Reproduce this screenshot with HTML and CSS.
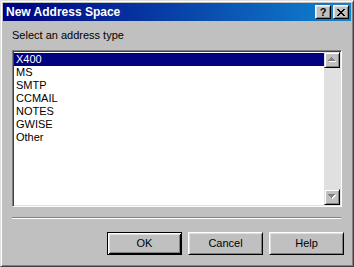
FILE: index.html
```html
<!DOCTYPE html>
<html>
<head>
<meta charset="utf-8">
<link rel="stylesheet" href="styles.css">
</head>
<body>
<div class="window">
  <div class="titlebar">
    <span class="title">New Address Space</span>
    <div class="caption-buttons">
      <div class="cap-btn help-btn">?</div>
      <div class="cap-btn close-btn">
        <svg width="8" height="7" viewBox="0 0 8 7" shape-rendering="crispEdges">
          <path d="M0 0h2v1h-2zM6 0h2v1h-2zM1 1h2v1h-2zM5 1h2v1h-2zM2 2h4v1h-4zM3 3h2v1h-2zM2 4h4v1h-4zM1 5h2v1h-2zM5 5h2v1h-2zM0 6h2v1h-2zM6 6h2v1h-2z" fill="#000"/>
        </svg>
      </div>
    </div>
  </div>
  <div class="content">
    <div class="label">Select an address type</div>
    <div class="listbox">
      <div class="list">
        <div class="item selected">X400</div>
        <div class="item">MS</div>
        <div class="item">SMTP</div>
        <div class="item">CCMAIL</div>
        <div class="item">NOTES</div>
        <div class="item">GWISE</div>
        <div class="item">Other</div>
      </div>
      <div class="scrollbar">
        <div class="sb-btn">
          <svg width="9" height="6" viewBox="0 0 9 6" shape-rendering="crispEdges">
            <path d="M4 1h1v1h1v1h1v1h1v1h-7v-1h1v-1h1v-1h1z" fill="#fff"/>
            <path d="M3 0h1v1h1v1h1v1h1v1h-7v-1h1v-1h1z" fill="#808080"/>
          </svg>
        </div>
        <div class="track"></div>
        <div class="sb-btn">
          <svg width="9" height="6" viewBox="0 0 9 6" shape-rendering="crispEdges">
            <path d="M1 1h7v1h-1v1h-1v1h-1v1h-1v-1h-1v-1h-1v-1h-1z" fill="#fff"/>
            <path d="M0 0h7v1h-1v1h-1v1h-1v1h-1v-1h-1v-1h-1v-1h-1z" fill="#808080"/>
          </svg>
        </div>
      </div>
    </div>
    <div class="separator"></div>
    <div class="button-row">
      <div class="btn default">OK</div>
      <div class="btn">Cancel</div>
      <div class="btn">Help</div>
    </div>
  </div>
</div>
</body>
</html>
```

FILE: styles.css
```css
html, body {
  margin: 0;
  padding: 0;
  background: #c0c0c0;
}

.window {
  width: 354px;
  height: 267px;
  box-sizing: border-box;
  background: #c0c0c0;
  border: 1px solid;
  border-color: #dfdfdf #404040 #404040 #dfdfdf;
  box-shadow: inset 1px 1px #fff, inset -1px -1px #808080;
  padding: 2px;
  font-family: "Liberation Sans", Arial, sans-serif;
  font-size: 11px;
  color: #000;
}

.titlebar {
  height: 18px;
  display: flex;
  align-items: center;
  justify-content: space-between;
  background: linear-gradient(to right, #000080, #1084d0);
  padding: 0 2px 0 3px;
}

.title {
  color: #fff;
  font-weight: bold;
  font-size: 12px;
  line-height: 18px;
}

.caption-buttons {
  display: flex;
  gap: 2px;
}

.cap-btn {
  width: 16px;
  height: 14px;
  box-sizing: border-box;
  background: #c0c0c0;
  border: 1px solid;
  border-color: #fff #000 #000 #fff;
  box-shadow: inset 1px 1px #dfdfdf, inset -1px -1px #808080;
  display: flex;
  align-items: center;
  justify-content: center;
}

.help-btn {
  font-weight: bold;
  font-size: 11px;
  line-height: 12px;
}

.content {
  padding-top: 8px;
}

.label {
  line-height: 13px;
  margin: 0 9px;
}

.listbox {
  margin: 8px 9px 0 9px;
  height: 157px;
  box-sizing: border-box;
  background: #fff;
  border: 1px solid;
  border-color: #808080 #fff #fff #808080;
  box-shadow: inset 1px 1px #404040, inset -1px -1px #dfdfdf;
  padding: 1px;
  display: flex;
}

.list {
  flex: 1;
  padding-top: 1px;
}

.item {
  height: 13px;
  line-height: 13px;
  padding-left: 2px;
}

.item.selected {
  background: #000080;
  color: #fff;
}

.scrollbar {
  width: 16px;
  display: flex;
  flex-direction: column;
}

.sb-btn {
  width: 16px;
  height: 16px;
  box-sizing: border-box;
  background: #c0c0c0;
  border: 1px solid;
  border-color: #dfdfdf #000 #000 #dfdfdf;
  box-shadow: inset 1px 1px #fff, inset -1px -1px #808080;
  display: flex;
  align-items: center;
  justify-content: center;
}

.track {
  flex: 1;
  background: #e0e0e0;
}

.separator {
  margin: 10px 10px 0 9px;
  border-top: 1px solid #808080;
  border-bottom: 1px solid #fff;
}

.button-row {
  display: flex;
  justify-content: flex-end;
  gap: 6px;
  margin-top: 13px;
  padding-right: 7px;
}

.btn {
  width: 75px;
  height: 23px;
  box-sizing: border-box;
  background: #c0c0c0;
  border: 1px solid;
  border-color: #fff #000 #000 #fff;
  box-shadow: inset 1px 1px #dfdfdf, inset -1px -1px #808080;
  display: flex;
  align-items: center;
  justify-content: center;
  line-height: 13px;
}

.btn.default {
  border-color: #000;
  box-shadow: inset 1px 1px #fff, inset -1px -1px #000, inset 2px 2px #dfdfdf, inset -2px -2px #808080;
}
```
